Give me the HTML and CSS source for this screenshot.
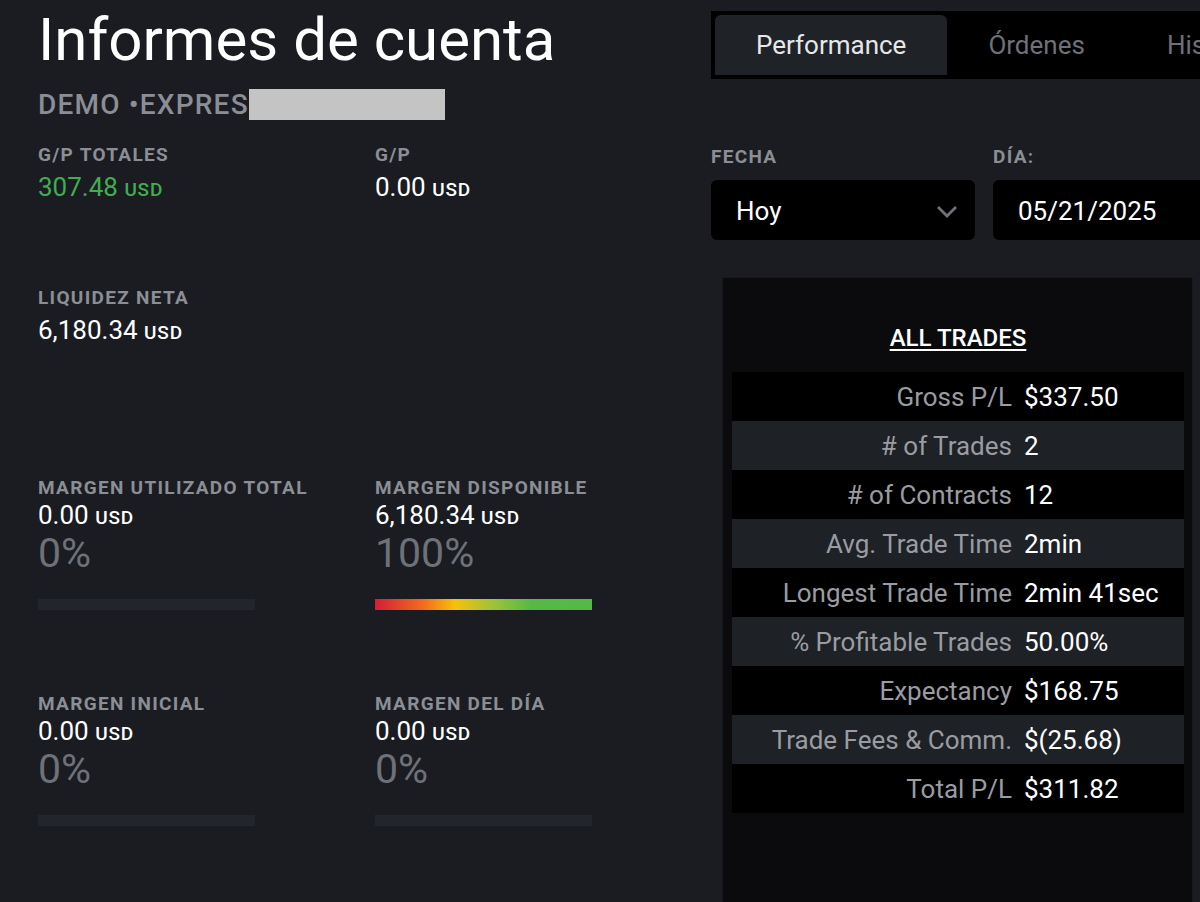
FILE: index.html
```html
<!DOCTYPE html>
<html lang="es">
<head>
<meta charset="utf-8">
<title>Informes de cuenta</title>
<link rel="stylesheet" href="styles.css">
</head>
<body>
<div class="page">
  <section class="left">
    <h1 class="title">Informes de cuenta</h1>
    <div class="account">DEMO •EXPRES<span class="redact"></span></div>

    <div class="metrics">
      <div class="metric m-top">
        <div class="label">G/P TOTALES</div>
        <div class="value green">307.48 <span class="cur">USD</span></div>
      </div>
      <div class="metric m-top">
        <div class="label">G/P</div>
        <div class="value">0.00 <span class="cur">USD</span></div>
      </div>
      <div class="metric m-liq">
        <div class="label">LIQUIDEZ NETA</div>
        <div class="value">6,180.34 <span class="cur">USD</span></div>
      </div>
      <div class="metric m-liq"></div>

      <div class="metric m-margin">
        <div class="label">MARGEN UTILIZADO TOTAL</div>
        <div class="value">0.00 <span class="cur">USD</span></div>
        <div class="pct">0%</div>
        <div class="bar"></div>
      </div>
      <div class="metric m-margin">
        <div class="label">MARGEN DISPONIBLE</div>
        <div class="value">6,180.34 <span class="cur">USD</span></div>
        <div class="pct">100%</div>
        <div class="bar bar-full"></div>
      </div>

      <div class="metric m-margin">
        <div class="label">MARGEN INICIAL</div>
        <div class="value">0.00 <span class="cur">USD</span></div>
        <div class="pct">0%</div>
        <div class="bar"></div>
      </div>
      <div class="metric m-margin">
        <div class="label">MARGEN DEL DÍA</div>
        <div class="value">0.00 <span class="cur">USD</span></div>
        <div class="pct">0%</div>
        <div class="bar"></div>
      </div>
    </div>
  </section>

  <section class="right">
    <nav class="tabs">
      <div class="tab active">Performance</div>
      <div class="tab">Órdenes</div>
      <div class="tab">Historial</div>
    </nav>

    <div class="filters">
      <div class="field">
        <div class="label">FECHA</div>
        <div class="select">
          <span>Hoy</span>
          <svg class="chev" width="24" height="16" viewBox="0 0 24 16"><path d="M3 4 L12 13 L21 4" fill="none" stroke="#6f7278" stroke-width="2.8"/></svg>
        </div>
      </div>
      <div class="field">
        <div class="label">DÍA:</div>
        <div class="select date"><span>05/21/2025</span></div>
      </div>
    </div>

    <div class="panel">
      <h2 class="panel-title">ALL TRADES</h2>
      <div class="stats">
        <div class="row"><span class="k">Gross P/L</span><span class="v">$337.50</span></div>
        <div class="row"><span class="k"># of Trades</span><span class="v">2</span></div>
        <div class="row"><span class="k"># of Contracts</span><span class="v">12</span></div>
        <div class="row"><span class="k">Avg. Trade Time</span><span class="v">2min</span></div>
        <div class="row"><span class="k">Longest Trade Time</span><span class="v">2min 41sec</span></div>
        <div class="row"><span class="k">% Profitable Trades</span><span class="v">50.00%</span></div>
        <div class="row"><span class="k">Expectancy</span><span class="v">$168.75</span></div>
        <div class="row"><span class="k">Trade Fees &amp; Comm.</span><span class="v">$(25.68)</span></div>
        <div class="row"><span class="k">Total P/L</span><span class="v">$311.82</span></div>
      </div>
    </div>
  </section>
</div>
</body>
</html>
```

FILE: styles.css
```css
* { box-sizing: border-box; }
html, body {
  margin: 0;
  padding: 0;
  width: 1200px;
  height: 902px;
  overflow: hidden;
  background: #1a1c21;
  color: #ffffff;
  font-family: Roboto, "Noto Sans", "Liberation Sans", sans-serif;
}
.page {
  display: flex;
  width: 1200px;
  height: 902px;
  overflow: hidden;
}
.left {
  width: 711px;
  flex: none;
  padding-left: 38px;
}
.title {
  margin: 0;
  padding-top: 7px;
  font-size: 60px;
  font-weight: 400;
  line-height: 66px;
  color: #ffffff;
}
.account {
  margin-top: 16px;
  height: 31px;
  display: flex;
  align-items: center;
  font-size: 28px;
  font-weight: 500;
  color: #8b8e95;
  letter-spacing: 1.2px;
}
.redact {
  display: inline-block;
  width: 196px;
  height: 31px;
  background: #c4c4c4;
}
.metrics {
  display: grid;
  grid-template-columns: 337px 1fr;
  margin-top: 25px;
}
.label {
  font-size: 19px;
  font-weight: 700;
  color: #8b8e95;
  letter-spacing: 1.3px;
  line-height: 20px;
  white-space: nowrap;
}
.value {
  font-size: 26px;
  line-height: 32px;
  margin-top: 6px;
  color: #ffffff;
  white-space: nowrap;
}
.value.green { color: #3fae4e; }
.cur {
  font-size: 19px;
  font-weight: 500;
  letter-spacing: 0.8px;
}
.m-top { height: 143px; }
.m-liq { height: 190px; }
.m-margin { height: 216px; }
.m-margin .value { margin-top: 1px; }
.pct {
  font-size: 41px;
  line-height: 42px;
  margin-top: -2px;
  color: #6e7178;
}
.bar {
  margin-top: 25px;
  width: 217px;
  height: 11px;
  background: #22252b;
}
.bar-full {
  background: linear-gradient(to right, #d41d35 0%, #f26b1d 22%, #f5c20b 37%, #9bc33a 55%, #56b947 72%, #55b948 100%);
}
.right {
  flex: none;
  width: 489px;
}
.tabs {
  margin-top: 11px;
  display: flex;
  height: 68px;
  width: 560px;
  background: #000000;
  padding: 4px;
}
.tab {
  padding: 0 41px;
  display: flex;
  align-items: center;
  font-size: 26px;
  color: #6e7177;
  white-space: nowrap;
}
.tab.active {
  background: #1f2227;
  color: #e6e7e9;
  border-radius: 6px 6px 0 0;
}
.filters {
  display: flex;
  gap: 18px;
  margin-top: 68px;
}
.field .label { margin-bottom: 13px; }
.select {
  width: 264px;
  height: 60px;
  background: #000000;
  border-radius: 6px;
  display: flex;
  align-items: center;
  justify-content: space-between;
  padding: 2px 16px 0 25px;
  font-size: 26px;
  color: #ffffff;
}
.select.date {
  width: 260px;
  border-radius: 6px 0 0 6px;
}
.chev { display: block; }
.panel {
  margin-top: 37px;
  margin-left: 11px;
  width: 471px;
  height: 640px;
  background: #0b0b0d;
  border: 1px solid #16181c;
  border-bottom: none;
  padding: 45px 8px 0 9px;
}
.panel-title {
  margin: 0 0 19px;
  text-align: center;
  font-size: 24px;
  font-weight: 500;
  line-height: 30px;
  text-decoration: underline;
  text-underline-offset: 3px;
  text-decoration-thickness: 2px;
  color: #ffffff;
}
.stats { display: flex; flex-direction: column; }
.row {
  display: flex;
  height: 49px;
  align-items: center;
  font-size: 26px;
  background: #000000;
  white-space: nowrap;
}
.row:nth-child(even) { background: #1e2126; }
.k {
  width: 292px;
  flex: none;
  text-align: right;
  color: #9a9ca2;
  padding-right: 12px;
}
.v { color: #ffffff; }
```
